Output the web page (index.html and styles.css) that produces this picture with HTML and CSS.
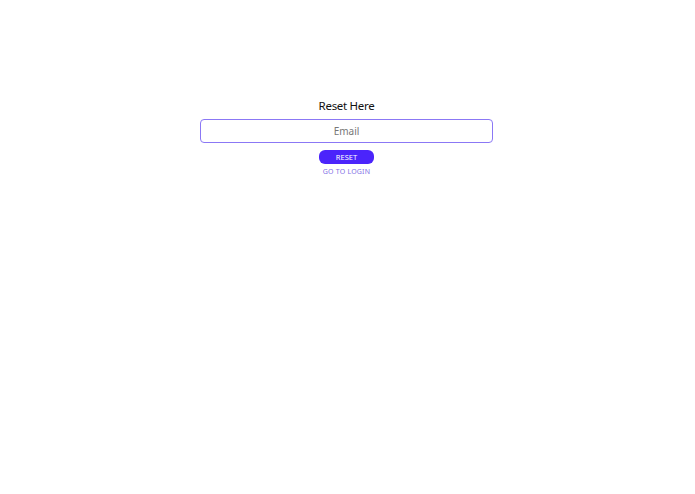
FILE: index.html
```html
<!DOCTYPE html>
<html>
<head>
<meta charset="utf-8">
<link rel="stylesheet" href="styles.css">
</head>
<body>
<div class="page">
  <form class="card">
    <h1 class="title">Reset Here</h1>
    <input class="field" type="email" placeholder="Email">
    <button class="btn" type="button">RESET</button>
    <a class="link" href="#">GO TO LOGIN</a>
  </form>
</div>
</body>
</html>
```
FILE: styles.css
```css
html, body {
  margin: 0;
  padding: 0;
  background: #fff;
}
body {
  font-family: "Noto Sans", "DejaVu Sans", sans-serif;
}
.page {
  display: flex;
  justify-content: center;
  padding-top: 98px;
  padding-right: 2px;
}
.card {
  display: flex;
  flex-direction: column;
  align-items: center;
  width: 293px;
}
.title {
  margin: 0;
  font-size: 11.5px;
  font-weight: 400;
  letter-spacing: -0.3px;
  color: #111;
  line-height: 16px;
}
.field {
  box-sizing: border-box;
  margin-top: 5px;
  width: 293px;
  height: 24px;
  border: 1px solid #8b78f5;
  border-radius: 4px;
  text-align: center;
  font-family: inherit;
  font-size: 10px;
  color: #333;
  outline: none;
}
.field::placeholder {
  color: #777;
}
.btn {
  margin-top: 7px;
  width: 55px;
  height: 14px;
  padding: 0;
  border: none;
  border-radius: 6px;
  background: #4b24fb;
  color: #fff;
  font-family: inherit;
  font-size: 7.5px;
  line-height: 14px;
}
.link {
  margin-top: 2px;
  font-size: 7px;
  line-height: 11px;
  letter-spacing: 0.2px;
  color: #7f70e6;
  text-decoration: none;
}
```
